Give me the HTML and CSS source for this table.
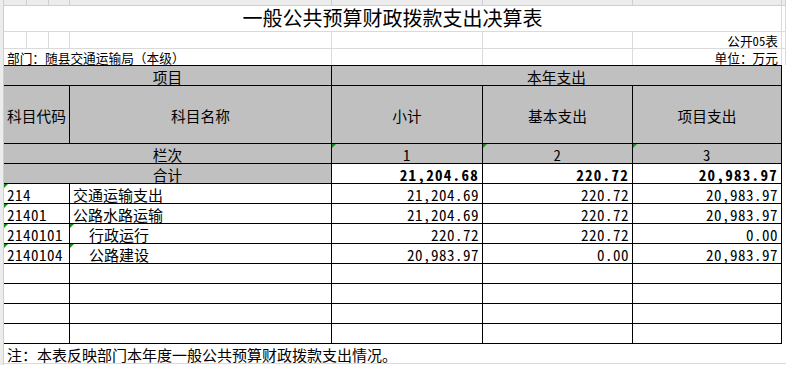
FILE: index.html
```html
<!DOCTYPE html>
<html lang="zh-CN">
<head>
<meta charset="UTF-8" />
<title>一般公共预算财政拨款支出决算表</title>
<link rel="stylesheet" href="styles.css">
</head>
<body>

<div class="sheet">
  <div class="rowhead"></div>

  <div class="main">
    <!-- 列标题条 -->
    <div class="cols strip">
      <div></div><div></div><div></div><div></div><div></div><div></div><div></div><div></div>
    </div>

    <!-- 表头区域 -->
    <div class="cols title-row">
      <div class="title">一般公共预算财政拨款支出决算表</div>
      <div></div>
    </div>
    <div class="cols info-row">
      <div></div><div></div><div></div><div></div><div></div><div></div>
      <div class="right">公开05表</div>
      <div></div>
    </div>
    <div class="cols info-row last">
      <div class="dept">部门：随县交通运输局（本级）</div>
      <div></div><div></div>
      <div class="right">单位：万元</div>
      <div></div>
    </div>

    <!-- 表格 -->
    <div class="tbl">
      <div class="c head span2">项目</div>
      <div class="c head span3">本年支出</div>

      <div class="c head">科目代码</div>
      <div class="c head">科目名称</div>
      <div class="c head">小计</div>
      <div class="c head">基本支出</div>
      <div class="c head">项目支出</div>

      <div class="c head span2">栏次</div>
      <div class="c head num-h mark">1</div>
      <div class="c head num-h mark">2</div>
      <div class="c head num-h mark">3</div>

      <div class="c head span2">合计</div>
      <div class="c num total">21,204.68</div>
      <div class="c num total">220.72</div>
      <div class="c num total">20,983.97</div>

      <div class="c code mark">214</div>
      <div class="c name">交通运输支出</div>
      <div class="c num">21,204.69</div>
      <div class="c num">220.72</div>
      <div class="c num">20,983.97</div>

      <div class="c code mark">21401</div>
      <div class="c name">公路水路运输</div>
      <div class="c num">21,204.69</div>
      <div class="c num">220.72</div>
      <div class="c num">20,983.97</div>

      <div class="c code mark">2140101</div>
      <div class="c name sub mark">行政运行</div>
      <div class="c num">220.72</div>
      <div class="c num">220.72</div>
      <div class="c num">0.00</div>

      <div class="c code mark">2140104</div>
      <div class="c name sub mark">公路建设</div>
      <div class="c num">20,983.97</div>
      <div class="c num">0.00</div>
      <div class="c num">20,983.97</div>

      <div class="c"></div><div class="c"></div><div class="c"></div><div class="c"></div><div class="c"></div>
      <div class="c"></div><div class="c"></div><div class="c"></div><div class="c"></div><div class="c"></div>
      <div class="c"></div><div class="c"></div><div class="c"></div><div class="c"></div><div class="c"></div>
      <div class="c"></div><div class="c"></div><div class="c"></div><div class="c"></div><div class="c"></div>
    </div>

    <div class="note">注：本表反映部门本年度一般公共预算财政拨款支出情况。</div>
  </div>
</div>

</body>
</html>
```

FILE: styles.css
```css
body {
  margin: 0;
  background: #fff;
  font-family: "Noto Sans Mono CJK SC", "Noto Sans CJK SC", sans-serif;
  color: #000;
}
.sheet {
  display: flex;
  width: 786px;
  height: 365px;
  overflow: hidden;
}
.rowhead {
  width: 3px;
  background: #ececec;
  border-right: 1px solid #cfcfcf;
}
.main {
  flex: 1;
}

/* 网格列：A B C D E F G H */
.cols {
  display: grid;
  grid-template-columns: 23px 22px 21px 262px 151px 150px 149px 1fr;
}
.cols > div {
  box-sizing: border-box;
  border-right: 1px solid #dadada;
  border-bottom: 1px solid #dadada;
}
.strip {
  height: 6px;
  background: #ececec;
}
.strip > div {
  border-right-color: #d0d0d0;
  border-bottom-color: #cfcfcf;
}
.title-row {
  height: 26px;
}
.title {
  grid-column: 1 / 8;
  font-size: 20px;
  display: flex;
  justify-content: center;
  align-items: flex-end;
  line-height: 20px;
  padding-bottom: 3px;
}
.info-row {
  height: 17px;
}
.info-row.last {
  height: 16px;
}
.info-row.last > div {
  border-bottom: none;
}
.info-row > div {
  font-size: 12.7px;
  line-height: 13px;
  display: flex;
  align-items: flex-end;
  white-space: nowrap;
  padding-bottom: 1px;
}
.right {
  justify-content: flex-end;
  padding-right: 3px;
}
.dept {
  grid-column: 1 / 5;
  padding-left: 3px;
}

/* 主表格 */
.tbl {
  display: grid;
  grid-template-columns: 66px 262px 151px 150px 149px;
  grid-template-rows: 20px 58px 20px 20px repeat(8, 20px);
  width: 778px;
  border-top: 1px solid #000;
}
.c {
  position: relative;
  box-sizing: border-box;
  border-right: 1px solid #000;
  border-bottom: 1px solid #000;
  display: flex;
  align-items: center;
  font-size: 15px;
  line-height: 15px;
  white-space: nowrap;
  padding-top: 1px;
}
.head {
  background: #c0c0c0;
  justify-content: center;
  font-size: 14.7px;
}
.span2 {
  grid-column: span 2;
}
.span3 {
  grid-column: span 3;
}
.num-h,
.num,
.code {
  letter-spacing: 0.5px;
}
.num {
  justify-content: flex-end;
  padding-right: 3px;
}
.total {
  font-weight: bold;
  letter-spacing: 1.3px;
}
.code,
.name {
  padding-left: 3px;
}
.name.sub {
  padding-left: 19px;
}

/* 绿色小三角（错误提示） */
.mark::before {
  content: "";
  position: absolute;
  top: 0;
  left: 0;
  border-top: 4px solid #12901a;
  border-right: 4px solid transparent;
}

.note {
  height: 20px;
  box-sizing: border-box;
  border-bottom: 1px solid #dadada;
  font-size: 15px;
  line-height: 15px;
  display: flex;
  align-items: center;
  padding: 1px 0 0 3px;
  white-space: nowrap;
}
```
